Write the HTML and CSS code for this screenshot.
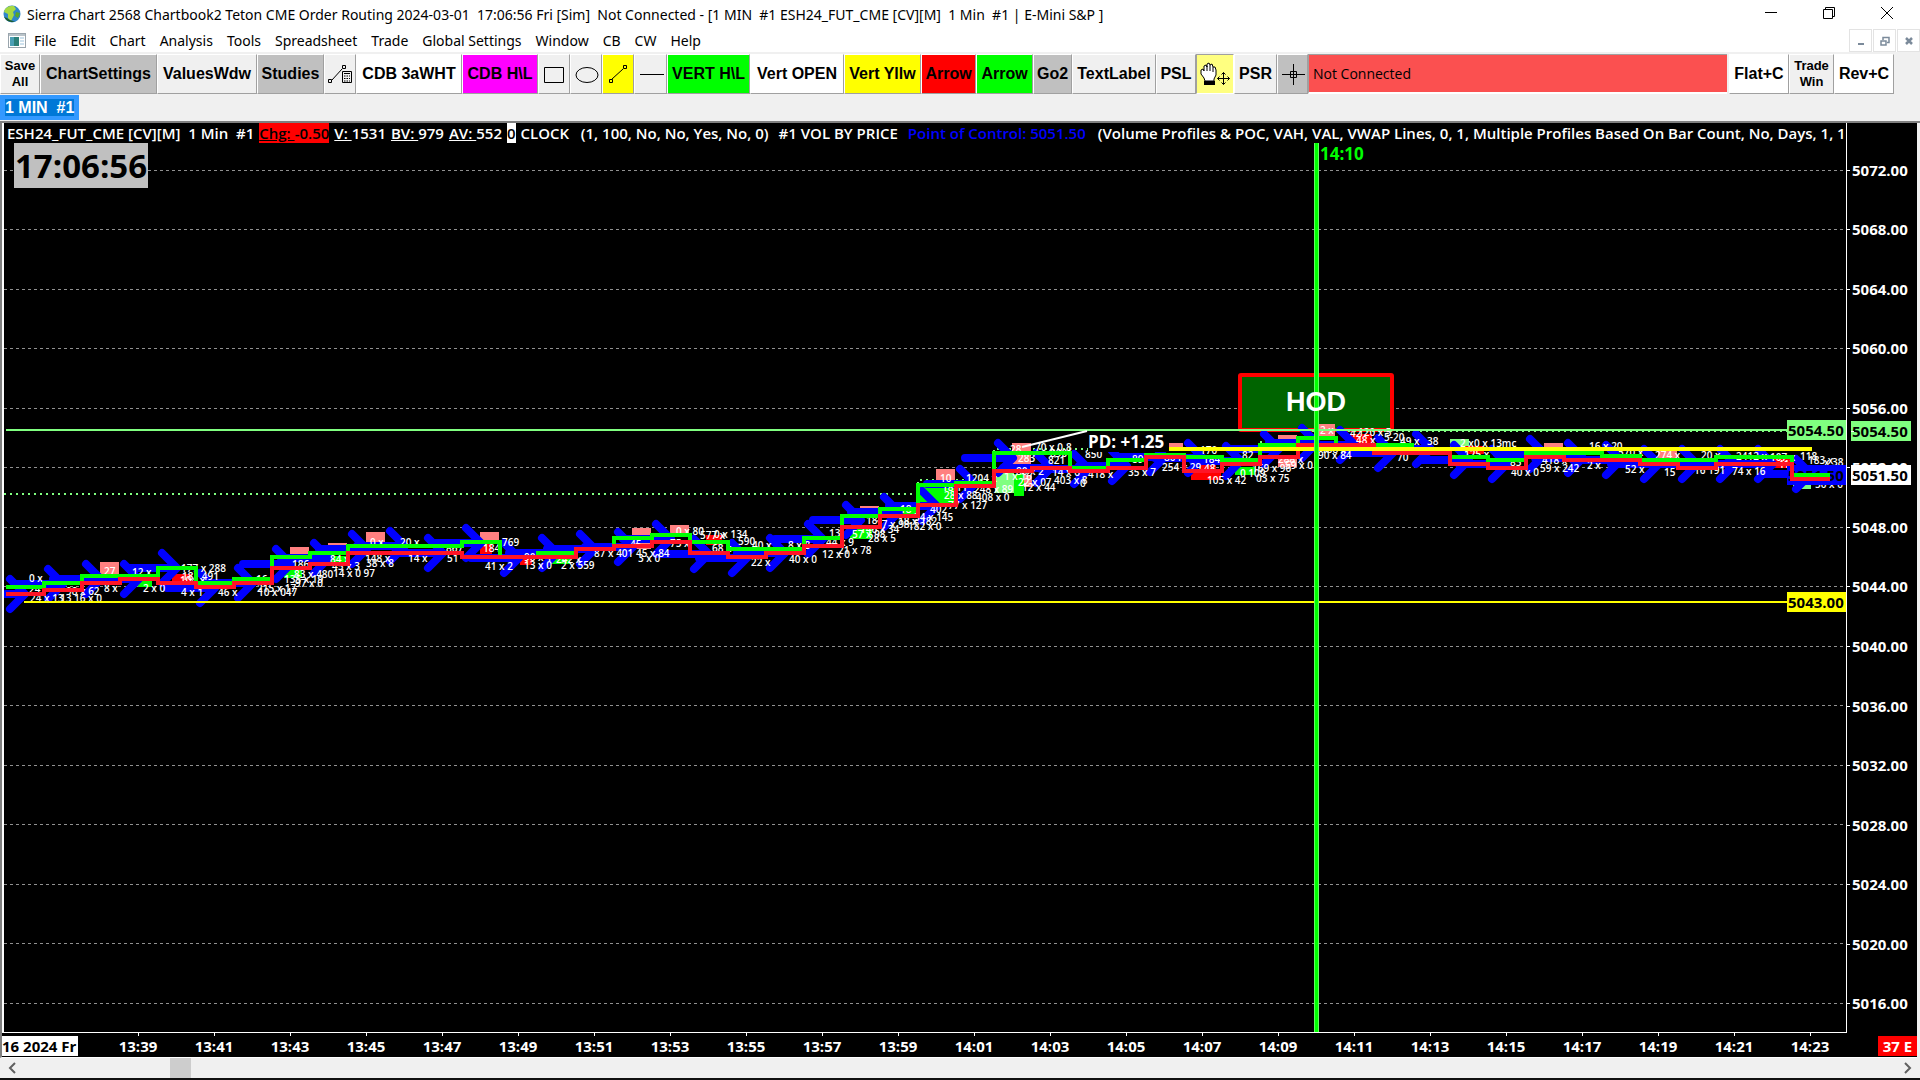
FILE: index.html
```html
<!DOCTYPE html>
<html lang="en">
<head>
    <meta charset="UTF-8">
    <meta name="viewport" content="width=device-width, initial-scale=1.0">
    <title>Sierra Chart</title>
    <link rel="stylesheet" href="styles.css">
</head>
<body>
    <header class="titlebar">
        <svg class="app-icon" viewBox="0 0 18 18" width="18" height="18">
            <circle cx="9" cy="9" r="8.5" fill="#2f86c9"/>
            <path d="M2 4 Q6 0 11 1 L13 4 L10 7 L11 10 L8 16 L5 13 L5 9 L1 7 Z" fill="#a6d943"/>
            <path d="M13 7 L17 8 L15 13 L12 11 Z" fill="#56a52c"/>
            <path d="M1 12 Q5 19 13 16 Q8 17 4 13 Z" fill="#1d5a2b"/>
        </svg>
        <span class="title-text">Sierra Chart 2568 Chartbook2 Teton CME Order Routing 2024-03-01  17:06:56 Fri [Sim]  Not Connected - [1 MIN  #1 ESH24_FUT_CME [CV][M]  1 Min  #1 | E-Mini S&amp;P ]</span>
        <div class="window-buttons">
            <button aria-label="Minimize"><svg width="14" height="14"><path d="M1 6.5H13"/></svg></button>
            <button aria-label="Restore"><svg width="14" height="14"><path d="M1.500 3.500h9v9h-9z M3.500 3.500v-2h9v9h-2"/></svg></button>
            <button aria-label="Close"><svg width="14" height="14"><path d="M1 1L13 13M13 1L1 13"/></svg></button>
        </div>
    </header>

    <nav class="menubar">
        <svg class="doc-icon" width="18" height="15">
            <rect x="0.5" y="0.5" width="17" height="14" fill="#fff" stroke="#9aa5ad"/>
            <rect x="1" y="1" width="16" height="2" fill="#b9c3c9"/>
            <rect x="2" y="4" width="9" height="9" fill="#2c7f78"/>
            <rect x="2" y="4" width="4" height="9" fill="#4b9fb5"/>
            <path d="M12 5h4M12 8h4M12 11h4" stroke="#9cc3dc"/>
        </svg>
        <button>File</button>
        <button>Edit</button>
        <button>Chart</button>
        <button>Analysis</button>
        <button>Tools</button>
        <button>Spreadsheet</button>
        <button>Trade</button>
        <button>Global Settings</button>
        <button>Window</button>
        <button>CB</button>
        <button>CW</button>
        <button>Help</button>
        <div class="mdi-buttons">
            <button aria-label="Minimize chart"><svg width="10" height="10"><path d="M2 8H8" stroke-width="2"/></svg></button>
            <button aria-label="Restore chart"><svg width="10" height="10"><path d="M1 5h5v4h-5z M3 4V1.500h6v5h-2" stroke-width="1.500"/></svg></button>
            <button aria-label="Close chart"><svg width="10" height="10"><path d="M2 2L8 8M8 2L2 8" stroke-width="2.500"/></svg></button>
        </div>
    </nav>

    <div class="toolbar">
        <button class="small">Save<br>All</button>
        <button class="gray">ChartSettings</button>
        <button>ValuesWdw</button>
        <button class="gray">Studies</button>
        <button aria-label="Line settings"><svg width="26" height="26"><path d="M5 19L15 8M1.500 18.500h3v3h-3z M15.500 4.500h3v3h-3z" class="ln"/><path d="M15.500 10.500h9v11h-9zM17 12.500h6" class="ln"/><path d="M17 15h6M17 17.500h6M17 20h6" class="ln" stroke-dasharray="1.500 1"/></svg></button>
        <button class="white">CDB 3aWHT</button>
        <button class="magenta">CDB H\L</button>
        <button aria-label="Rectangle"><svg width="26" height="26"><path d="M3.500 6.500h19v15h-19z" class="ln"/></svg></button>
        <button aria-label="Ellipse"><svg width="26" height="26"><ellipse cx="14" cy="14" rx="11" ry="7.500" class="ln"/></svg></button>
        <button class="yellow" aria-label="Line"><svg width="26" height="26"><path d="M7 18L18 8M4.500 18.500h3v3h-3z M18.500 4.500h3v3h-3z" class="ln"/></svg></button>
        <button aria-label="Horizontal line"><svg width="26" height="26"><path d="M2 13.500H26" class="ln"/></svg></button>
        <button class="green">VERT H\L</button>
        <button class="white">Vert OPEN</button>
        <button class="yellow">Vert Yllw</button>
        <button class="red">Arrow</button>
        <button class="green">Arrow</button>
        <button class="gray">Go2</button>
        <button>TextLabel</button>
        <button>PSL</button>
        <button class="pressed" aria-label="Hand"><svg width="32" height="26"><path d="M6 20L5 17L2 13V9L4 8L5 10V5L7 4L8 6V3L10 2L11 4L13 3L14 6L16 6L17 9V14L15 18V20Z" fill="#fff" stroke="#000"/><path d="M8 5V10M11 4V10M14 6V11" class="ln"/><path d="M5 20h11v4H5z"/><path d="M24.500 11.500v12M18.500 17.500h12M22.500 13.500l2-2 2 2M22.500 21.500l2 2 2-2M20.500 15.500l-2 2 2 2M28.500 15.500l2 2-2 2" class="ln"/></svg></button>
        <button>PSR</button>
        <button class="gray" aria-label="Crosshair"><svg width="26" height="26"><path d="M13.500 3V24M2 13.500H25M10.500 10.500h6v6h-6z" class="ln"/></svg></button>
        <div class="status">Not Connected</div>
        <button class="white">Flat+C</button>
        <button class="small">Trade<br>Win</button>
        <button class="white">Rev+C</button>
    </div>

    <div class="tabs">
        <button class="tab"><span>1 MIN  #1</span></button>
    </div>

    <main class="chart">
        <section class="plot">
            <svg id="canvas" class="canvas" viewBox="4 123 1842 909" preserveAspectRatio="xMinYMin slice"></svg>
            <div class="info"><span>ESH24_FUT_CME [CV][M]  1 Min  #1</span><span class="chg"><u>Chg: </u>-0.50</span><span><u>V: </u>1531</span><span><u>BV: </u>979</span><span><u>AV: </u>552</span><span class="zero">0</span><span class="study">CLOCK   (1, 100, No, No, Yes, No, 0)</span><span class="study">#1 VOL BY PRICE</span><span class="poc">Point of Control: 5051.50</span><span>(Volume Profiles &amp; POC, VAH, VAL, VWAP Lines, 0, 1, Multiple Profiles Based On Bar Count, No, Days, 1, 1</span></div>
            <div class="clock">17:06:56</div>
        </section>
        <aside class="prices" id="prices"></aside>
        <footer class="times">
            <span class="date">16 2024 Fr</span>
            <div class="time-labels" id="times"></div>
            <span class="count">37 E</span>
        </footer>
    </main>

    <div class="scroller">
        <button aria-label="Scroll left"><svg width="10" height="12"><path d="M8 1L3 6L8 11"/></svg></button>
        <input type="range" min="0" max="1000" value="79" aria-label="Chart position">
        <button aria-label="Scroll right"><svg width="10" height="12"><path d="M2 1L7 6L2 11"/></svg></button>
    </div>

    <script src="chart.js"></script>
</body>
</html>
```
FILE: styles.css
```css
* {
    box-sizing: border-box;
}

body {
    margin: 0;
    height: 100vh;
    display: flex;
    flex-direction: column;
    overflow: hidden;
    background: #f0f0f0;
    border-bottom: 2px solid #111;
    font-family: "Open Sans", "Noto Sans", sans-serif;
    font-size: 14px;
    color: #000;
}

button {
    font: inherit;
    color: inherit;
    border: none;
    background: none;
    padding: 0;
    white-space: pre;
}

.titlebar, .menubar {
    display: flex;
    align-items: center;
    background: #fff;
    flex: none;
    font-family: "Noto Sans", "Open Sans", sans-serif;
}

.titlebar {
    height: 28px;
    padding-left: 3px;
    padding-right: 4px;
}

.title-text {
    flex: 1;
    margin-left: 6px;
    white-space: pre;
    overflow: hidden;
}

.window-buttons {
    display: flex;
}

.window-buttons button {
    width: 58px;
    height: 28px;
}

.window-buttons svg {
    fill: none;
    stroke: #000;
}

.menubar {
    height: 26px;
    gap: 14px;
    padding-left: 8px;
    border-bottom: 2px solid #f0f0f0;
}

.doc-icon {
    margin-right: -6px;
}

.mdi-buttons {
    margin-left: auto;
    display: flex;
    gap: 1px;
}

.mdi-buttons button {
    width: 23px;
    height: 23px;
    border: 1px solid #e3e3e3;
}

.mdi-buttons svg {
    fill: none;
    stroke: #7b8a9a;
}

.toolbar {
    display: grid;
    grid-template-columns: 40px 117px 100px 67px 32px 106px 76px 32px 32px 32px 33px 83px 94px 77px 55px 57px 39px 84px 40px 38px 43px 31px 1fr 60px 45px 60px;
    height: 40px;
    flex: none;
    padding-right: 26px;
    font-family: "Liberation Sans", Arial, sans-serif;
    font-size: 16px;
    font-weight: bold;
}

.toolbar button {
    display: flex;
    align-items: center;
    justify-content: center;
    border-top: 1px solid #fff;
    border-left: 1px solid #fff;
    border-right: 1px solid #a0a0a0;
    border-bottom: 1px solid #a0a0a0;
}

.toolbar .small {
    font-size: 13px;
    line-height: 16px;
}

.toolbar .gray { background: #c0c0c0; }
.toolbar .white { background: #fff; }
.toolbar .magenta { background: #f0f; }
.toolbar .yellow { background: #ff0; }
.toolbar .green { background: #0f0; }
.toolbar .red { background: #f00; }
.toolbar .pressed { background: #ffff80; border-color: #a0a0a0 #fff #fff #a0a0a0; }

.ln {
    fill: none;
    stroke: #000;
}

.status {
    margin-right: 2px;
    padding-left: 4px;
    line-height: 37px;
    background: #fb5050;
    border-top: 1px solid #a0a0a0;
    border-left: 1px solid #a0a0a0;
    border-bottom: 2px solid #fff;
    font-family: "Open Sans", "Noto Sans", sans-serif;
    font-size: 14px;
    font-weight: normal;
}

.tabs {
    height: 29px;
    flex: none;
    border-bottom: 2px solid #808080;
    padding-top: 1px;
}

.tab {
    height: 25px;
    padding: 0 5px;
    background: #3399ff;
    color: #fff;
    font-family: "Liberation Sans", Arial, sans-serif;
    font-size: 16px;
    font-weight: bold;
}

.tab span {
    background: #0078d7;
}

.chart {
    flex: 1;
    min-height: 0;
    display: grid;
    grid-template-columns: 1fr 70px;
    grid-template-rows: 1fr 24px;
    margin-right: 3px;
    background: #000;
    color: #fff;
    border-left: 2px solid #808080;
    border-bottom: 1px solid #fff;
    font-weight: bold;
}

.plot {
    position: relative;
    overflow: hidden;
    border: 1px solid #fff;
    border-top: none;
    border-left-width: 2px;
}

.canvas {
    position: absolute;
    inset: 0;
    width: 100%;
    height: 100%;
}

.info {
    position: relative;
    display: flex;
    height: 20px;
    padding-left: 3px;
    line-height: 20px;
    background: #000;
    font-size: 15px;
    font-weight: 600;
    white-space: pre;
    overflow: hidden;
}

.info span {
    margin-right: 5px;
}

.info .chg {
    background: #f00;
    color: #000;
}

.info .zero {
    background: #fff;
    color: #000;
}

.info .study {
    margin-right: 10px;
}

.info .poc {
    color: #00f;
    margin-right: 12px;
}

.clock {
    position: relative;
    width: max-content;
    margin-left: 10px;
    padding: 0 1px;
    background: #c0c0c0;
    color: #000;
    font-size: 33px;
    line-height: 45px;
}

.prices {
    position: relative;
    display: grid;
    grid-auto-rows: 1fr;
    align-items: center;
    padding-top: 17px;
    font-size: 15px;
}

.prices span {
    position: relative;
    padding-left: 5px;
}

.prices span::before {
    content: "";
    position: absolute;
    left: 0;
    top: 10px;
    width: 3px;
    height: 1px;
    background: #fff;
}

.prices .tag {
    position: absolute;
    left: 4px;
    width: 60px;
    padding-left: 1px;
    line-height: 20px;
    transform: translateY(-50%);
    color: #000;
}

.tag-high { background: #80ff80; }
.tag-last { background: #fff; }

.times {
    grid-column: 1 / -1;
    display: grid;
    grid-template-columns: 98px 1fr 69px;
    line-height: 20px;
    font-size: 15px;
}

.time-labels {
    display: grid;
    grid-auto-flow: column;
    grid-auto-columns: 1fr;
}

.time-labels span {
    position: relative;
    padding-top: 3px;
    text-align: center;
}

.time-labels span::before {
    content: "";
    position: absolute;
    left: 50%;
    top: 0;
    width: 1px;
    height: 3px;
    background: #fff;
}

.date {
    width: 76px;
    height: 20px;
    margin-top: 3px;
    background: #fff;
    color: #000;
    white-space: nowrap;
    overflow: hidden;
}

.count {
    justify-self: end;
    width: 39px;
    height: 20px;
    margin-top: 3px;
    background: #f00;
    text-align: center;
}

.scroller {
    display: flex;
    height: 20px;
    flex: none;
}

.scroller button {
    width: 24px;
}

.scroller svg {
    fill: none;
    stroke: #606060;
    stroke-width: 2;
}

.scroller input {
    appearance: none;
    flex: 1;
    margin: 0;
    background: none;
}

.scroller input::-webkit-slider-thumb {
    appearance: none;
    width: 21px;
    height: 20px;
    background: #cdcdcd;
}

.grid { stroke: #909090; stroke-dasharray: 3 3; }
.dots { stroke: #80ff80; stroke-width: 2; stroke-dasharray: 2 4; fill: none; }
.arrow { stroke: #00f; stroke-width: 8; stroke-linecap: round; stroke-linejoin: round; fill: none; }
.up { stroke: #0f0; stroke-width: 4; fill: none; }
.down { stroke: #ff1426; stroke-width: 4; fill: none; }
.vol { fill: #fff; font-size: 10px; font-weight: 600; }
.lbl { font-size: 15px; font-weight: bold; }
.note { font-size: 17px; font-weight: bold; }
.hod { fill: #fff; font-family: "Liberation Sans", Arial, sans-serif; font-size: 27px; font-weight: bold; text-anchor: middle; }
```
FILE: chart.js
```js
var HIGH = 5072, LOW = 5016, STEP = 4;
var BAR = 38;

// one row per minute from 13:36: upper line, lower line, arrow top
var bars = [
    [587, 594, 578], [583, 590, 568], [576, 583, 563], [576, 579, 563],
    [568, 583, 552], [583, 587, 572], [579, 583, 567], [557, 568, 548],
    [553, 564, 542], [546, 553, 533], [546, 553, 530], [546, 553, 537],
    [542, 557, 527], [557, 557, 542], [553, 557, 537], [549, 549, 533],
    [538, 546, 531], [535, 542, 523], [542, 553, 538], [549, 557, 542],
    [549, 553, 537], [538, 546, 523], [516, 527, 504], [509, 516, 496],
    [485, 505, 490], [483, 486, 468], [453, 471, 442], [453, 468, 452],
    [468, 471, 453], [460, 468, 450], [455, 457, 441], [457, 471, 442],
    [460, 464, 445], [445, 457, 433], [438, 445, 427], [445, 445, 429],
    [445, 453, 437], [453, 453, 433], [457, 464, 444], [460, 468, 448],
    [453, 457, 438], [453, 460, 442], [456, 460, 444], [460, 464, 448],
    [460, 468, 448], [457, 464, 448], [457, 464, 448], [475, 479, 458]
];

// x, y, width, height, colour
var boxes = [
    [100, 562, 19, 14, '#ff8080'], [290, 547, 19, 8, '#ff8080'], [328, 543, 19, 6, '#ff8080'],
    [366, 532, 19, 12, '#ff8080'], [480, 532, 19, 10, '#ff8080'], [632, 528, 19, 8, '#ff8080'],
    [670, 525, 19, 10, '#ff8080'], [860, 506, 19, 4, '#ff8080'], [936, 469, 19, 12, '#ff8080'],
    [1012, 443, 19, 22, '#ff8080'], [1164, 443, 19, 8, '#ff8080'], [1278, 435, 19, 8, '#ff8080'],
    [1317, 424, 18, 16, '#ff8080'], [1544, 443, 19, 8, '#ff8080'], [1658, 451, 19, 8, '#ff8080'],
    [632, 543, 19, 6, '#ff8080'], [1278, 455, 19, 12, '#ff8080'], [1020, 475, 12, 12, '#ff8080'],
    [1450, 439, 19, 8, '#80ff80'], [995, 470, 19, 23, '#80ff80'], [1793, 482, 18, 7, '#80ff80'],
    [1191, 472, 30, 8, '#f00'], [1200, 461, 16, 8, '#f00'], [172, 574, 20, 8, '#f00'],
    [480, 544, 12, 10, '#f00'], [520, 557, 12, 8, '#f00'], [706, 535, 16, 10, '#f00'],
    [1350, 434, 22, 10, '#f00'], [1462, 446, 22, 8, '#f00'], [1774, 459, 18, 9, '#f00'],
    [284, 570, 18, 8, '#0f0'], [138, 578, 14, 9, '#0f0'], [550, 556, 20, 8, '#0f0'],
    [850, 528, 22, 11, '#0f0'], [895, 506, 22, 8, '#0f0'], [920, 486, 34, 17, '#0f0'],
    [1014, 474, 10, 22, '#0f0'], [1235, 467, 20, 8, '#0f0'], [332, 556, 14, 7, '#0f0']
];

// x, y, text
var vols = [
    [29, 582, '0 x'], [29, 593, '24'], [30, 602, '24 x 13'], [60, 602, '13 16 x 0'], [66, 595, '98 x 62'],
    [104, 575, '27'], [104, 592, '8 x'], [132, 576, '12 x'], [143, 592, '2 x 0'], [181, 572, '177 x 288'],
    [182, 580, '181 491'], [180, 584, '104 x'], [181, 596, '4 x 1'], [218, 596, '46 x'], [256, 583, '16'],
    [257, 592, '215 x 17'], [258, 596, '10 x 047'], [284, 583, '135 x 19'], [292, 568, '186'],
    [294, 578, '83 x 480'], [295, 587, '97 x 0'], [330, 563, '84 x'], [332, 570, '45 x 3'],
    [333, 577, '14 x 0 97'], [365, 562, '148 x'], [366, 567, '38 x 8'], [370, 546, '0 x'], [400, 546, '20 x'],
    [408, 562, '14 x'], [446, 552, '867'], [447, 562, '51'], [483, 552, '184'], [502, 546, '769'],
    [485, 570, '41 x 2'], [524, 561, '90 x 1'], [524, 569, '13 x 0'], [556, 563, '242 x'],
    [561, 569, '2 x 559'], [594, 557, '87 x 401'], [630, 548, '45'], [636, 557, '45 x 84'],
    [638, 562, '3 x 0'], [676, 535, '0 x 80'], [670, 547, '75 x'], [700, 539, '577 x'], [714, 538, '0 x 134'],
    [712, 552, '68 x'], [738, 545, '590'], [752, 549, '40 x'], [751, 566, '22 x'], [788, 549, '8 x 8'],
    [789, 563, '40 x 0'], [829, 537, '13'], [826, 546, '44 x 9'], [822, 558, '12 x 0'], [838, 554, '21 x 78'],
    [852, 538, '57 x 98'], [860, 533, '146 x 34'], [866, 524, '18'], [868, 542, '28 x 5'], [876, 528, '27 x 98'],
    [898, 525, '18 x 182'], [900, 513, '18'], [908, 530, '182 x 0'], [914, 521, '34 x 145'],
    [930, 513, '402'], [940, 482, '10'], [942, 491, '18 11'], [944, 499, '28 x 88'],
    [948, 509, '77 x 127'], [966, 482, '1204 x'], [974, 493, '248 x 89'], [976, 501, '408 x 0'],
    [1004, 480, '1 x 16'], [1010, 453, '28'], [1018, 462, '283'], [1016, 475, '80 x 2'], [1018, 486, '22 x 07'],
    [1022, 491, '12 x 44'], [1035, 451, '70 x 0'], [1050, 457, '890'], [1048, 464, '821'], [1052, 476, '14 x 6'],
    [1054, 484, '403 x 8'], [1066, 451, '8'], [1080, 487, '0'], [1085, 458, '850'], [1088, 478, '418 x'],
    [1128, 476, '35 x 7'], [1132, 463, '89'], [1164, 461, '804'], [1162, 471, '254 x 29'], [1200, 454, '170'],
    [1203, 463, '184'], [1204, 472, '48'], [1207, 484, '105 x 42'], [1242, 459, '82'], [1240, 477, '0 109'],
    [1252, 472, '169 x 96'], [1256, 482, '03 x 75'], [1278, 463, '288 x'], [1285, 469, '59 x 0'],
    [1320, 434, '2 x'], [1321, 453, '108 x'], [1318, 459, '90 x 84'], [1350, 437, '42'], [1358, 436, '120 x 5'],
    [1356, 444, '48 x'], [1384, 441, '5-20'], [1400, 445, '49 x'], [1397, 461, '70'], [1427, 445, '38'],
    [1460, 447, '2 x'], [1474, 447, '0 x 13mc'], [1464, 458, '125 x'], [1510, 466, '85'], [1511, 476, '40 x 0'],
    [1542, 464, '418 x'], [1540, 472, '59 x 242'], [1587, 469, '2 x'], [1589, 450, '16 x 20'],
    [1618, 456, '570 x'], [1625, 473, '52 x'], [1655, 459, '274 x'], [1664, 476, '15'], [1694, 474, '16 191'],
    [1701, 459, '20 x'], [1732, 475, '74 x 16'], [1736, 460, '2412 x'], [1770, 461, '107 x'],
    [1778, 468, '41'], [1800, 460, '118'], [1808, 464, '183 x'], [1824, 466, 'x 38'], [1815, 488, '50 x 0']
];

function steps(col) {
    var d = '';
    bars.forEach(function(b, i) {
        var x = 6 + i * BAR;
        d += (i ? 'L' : 'M') + x + ' ' + b[col] + 'H' + (x + BAR);
    });
    return d;
}

function priceY(p) {
    return 170 + (HIGH - p) * 14.875;
}

function drawChart() {
    var out = '';
    for (var p = HIGH; p >= LOW; p -= STEP) {
        var y = Math.floor(priceY(p)) + 0.5;
        out += `<path class="grid" d="M4 ${y}H1846"/>`;
    }

    out += '<rect x="1240" y="375" width="152" height="55" rx="1" fill="#006400" stroke="#f00" stroke-width="4"/>';
    out += '<path class="dots" d="M4 494H918V480H994V449H1088M1260 442H1300M1300 431H1787"/>';

    boxes.forEach(function(b) {
        out += `<rect x="${b[0]}" y="${b[1]}" width="${b[2]}" height="${b[3]}" fill="${b[4]}"/>`;
    });
    bars.forEach(function(b, i) {
        var x = 6 + i * BAR, y = b[2];
        var tail = i ? x - 29 : x;
        out += `<path class="arrow" d="M${tail} ${y + 16}H${x + 18}M${x + 4} ${y + 1}L${x + 19} ${y + 16}L${x + 4} ${y + 31}"/>`;
    });
    vols.forEach(function(v) {
        out += `<text class="vol" x="${v[0]}" y="${v[1]}">${v[2]}</text>`;
    });

    // last price
    out += '<rect x="1787" y="465" width="59" height="20" fill="#00f"/>';
    out += '<text class="lbl" x="1788" y="481">5051.50</text>';

    out += `<path class="up" d="${steps(0)}"/>`;
    out += `<path class="down" d="${steps(1)}"/>`;

    // day high, day low
    out += '<path d="M6 430H1787" stroke="#80ff80" stroke-width="2"/>';
    out += '<rect x="1787" y="420" width="59" height="20" fill="#80ff80"/>';
    out += '<text class="lbl" x="1788" y="436">5054.50</text>';
    out += '<path d="M24 602H1787" stroke="#ff0" stroke-width="2"/>';
    out += '<rect x="1787" y="592" width="59" height="20" fill="#ff0"/>';
    out += '<text class="lbl" x="1788" y="608">5043.00</text>';
    out += '<path d="M1169 449H1812" stroke="#ff0" stroke-width="4"/>';

    out += '<path d="M1022 447L1087 431" stroke="#fff" stroke-width="2"/>';
    out += '<rect x="1088" y="431" width="81" height="21"/>';
    out += '<text class="note" x="1088" y="448" fill="#fff">PD: +1.25</text>';

    out += '<path d="M1316.5 143V1032" stroke="#60ff60" stroke-width="5"/>';
    out += '<path d="M1316.5 143V1032" stroke="#0f0" stroke-width="3"/>';
    out += '<text class="note" x="1320" y="160" fill="#0f0">14:10</text>';
    out += '<text class="hod" x="1316" y="411">HOD</text>';
    document.getElementById('canvas').innerHTML = out;
}

function drawAxes() {
    var prices = '';
    for (var p = HIGH; p >= LOW; p -= STEP) {
        prices += `<span>${p}.00</span>`;
    }
    prices += '<span class="tag tag-high" style="top: 33.8%">5054.50</span>';
    prices += '<span class="tag tag-last" style="top: 38.7%">5051.50</span>';
    document.getElementById('prices').innerHTML = prices;

    var times = '';
    for (var m = 39; m <= 83; m += 2) {
        var h = m < 60 ? 13 : 14;
        times += `<span>${h}:${String(m % 60).padStart(2, '0')}</span>`;
    }
    document.getElementById('times').innerHTML = times;
}

drawChart();
drawAxes();
```
